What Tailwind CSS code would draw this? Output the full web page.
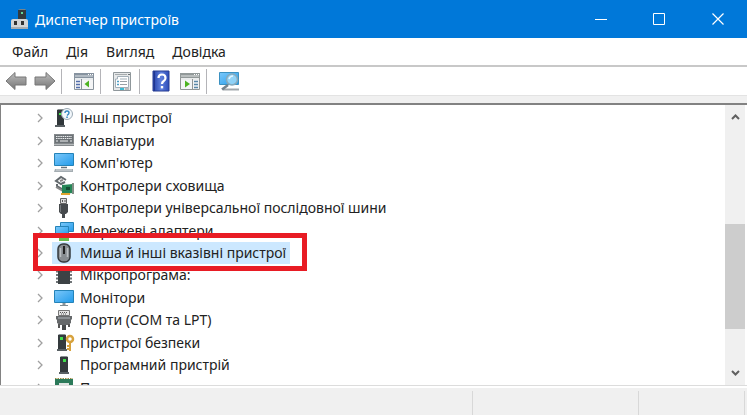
<!DOCTYPE html>
<html lang="uk">
<head>
  <meta charset="UTF-8" />
  <meta name="viewport" content="width=device-width, initial-scale=1" />
  <title>Диспетчер пристроїв</title>
  <script src="https://cdn.jsdelivr.net/npm/@tailwindcss/browser@4"></script>
</head>
<body class="flex h-screen flex-col overflow-hidden bg-[#f0f0f0] font-['Noto_Sans','Open_Sans',sans-serif] text-[14px] text-[#222]">
  <svg class="absolute size-0" aria-hidden="true">
    <defs>
      <linearGradient id="screen" x1="0" y1="0" x2="1" y2="1"><stop offset="0" stop-color="#7cc8fa" /><stop offset="1" stop-color="#229bea" /></linearGradient>
      <linearGradient id="steel" x1="0" y1="0" x2="0" y2="1"><stop offset="0" stop-color="#bdbdbd" /><stop offset="1" stop-color="#757575" /></linearGradient>
      <linearGradient id="blue" x1="0" y1="0" x2="1" y2="0"><stop offset="0" stop-color="#2440a8" /><stop offset=".5" stop-color="#5f80dd" /><stop offset="1" stop-color="#2c4cb8" /></linearGradient>
    </defs>
  </svg>

  <!-- title bar -->
  <header class="flex h-[38px] shrink-0 items-center bg-[#0078d9] text-white">
    <svg class="ml-[10px] h-[22px] w-[20px]" viewBox="0 0 20 22">
      <path d="M8 2h8v11H8z" fill="#333b40" /><path d="M8 2l2-1h5l1 1z" fill="#77848b" /><path d="M11 4h2v2h-2z" fill="#63d69a" />
      <path d="M1 13q0-2 2-2h13q2 0 2 2v8H1z" fill="#d3d5d7" /><path d="M1 19h17v2H1z" fill="#a9adb0" />
      <path d="M4 13h3v4H4zM11 13h3v4h-3z" fill="#333" />
    </svg>
    <h1 class="ml-[5px] grow">Диспетчер пристроїв</h1>
    <button class="flex h-full w-[58px] items-center justify-center" aria-label="Згорнути">
      <svg class="size-[14px]" viewBox="0 0 14 14" fill="none" stroke="#fff"><path d="M1 7.500h12" /></svg>
    </button>
    <button class="flex h-full w-[58px] items-center justify-center" aria-label="Розгорнути">
      <svg class="size-[14px]" viewBox="0 0 14 14" fill="none" stroke="#fff"><path d="M1.500 1.500h11v11h-11z" /></svg>
    </button>
    <button class="flex h-full w-[59px] items-center justify-center" aria-label="Закрити">
      <svg class="size-[14px]" viewBox="0 0 14 14" fill="none" stroke="#fff" stroke-width="1.200"><path d="M1.500 1.500l11 11M12.500 1.500l-11 11" /></svg>
    </button>
  </header>

  <!-- menu -->
  <nav class="flex h-[29px] shrink-0 items-center gap-[18px] border-b-2 border-[#c8c8c8] bg-white pl-[12px]">
    <button>Файл</button>
    <button>Дія</button>
    <button>Вигляд</button>
    <button>Довідка</button>
  </nav>

  <!-- toolbar -->
  <div class="flex h-[29px] shrink-0 items-center border-b border-[#e3e3e3] bg-white pl-[5px]" role="toolbar">
    <button aria-label="Назад">
      <svg class="h-[20px] w-[22px]" viewBox="0 0 22 20"><path d="M1 10l9-8.500v4.500h11v8H10v4.500z" fill="url(#steel)" stroke="#777" /></svg>
    </button>
    <button class="ml-[7px]" aria-label="Вперед">
      <svg class="h-[20px] w-[22px]" viewBox="0 0 22 20"><path d="M21 10l-9-8.500v4.500H1v8h11v4.500z" fill="url(#steel)" stroke="#777" /></svg>
    </button>
    <span class="ml-[5px] h-[25px] w-px bg-[#b4b4b8]"></span>
    <button class="ml-[11px]" aria-label="Дерево консолі">
      <svg class="h-[20px] w-[22px]" viewBox="0 0 22 20">
        <path d="M1.500 2.500h19v16h-19z" fill="#f4f5f6" stroke="#8a949d" /><path d="M1 2h20v5H1z" fill="#8793a0" />
        <path d="M2 5h18M2 8h18" stroke="#dce2e6" /><path d="M15 3.500h1M17 3.500h1M19 3.500h1" stroke="#fff" />
        <path d="M8.500 8v10" stroke="#8a949d" /><path d="M3 10.500h4M3 13.500h4M3 16.500h4" stroke="#536fac" stroke-width="1.500" />
        <path d="M16 9.500v7l-4.500-3.500z" fill="#4db321" />
      </svg>
    </button>
    <span class="ml-[5px] h-[25px] w-px bg-[#b4b4b8]"></span>
    <button class="ml-[11px]" aria-label="Властивості">
      <svg class="h-[22px] w-[20px]" viewBox="0 0 20 22">
        <path d="M1.500 2.500h17v18h-17z" fill="#e6e8e9" stroke="#8f979b" /><path d="M3 4.500h12" stroke="#a6abad" /><path d="M16 4.500h2" stroke="#6c7275" />
        <path d="M3.500 9h2V6.500h11v11h-13z" fill="#fff" stroke="#a2afb8" /><path d="M8 9h7" stroke="#a2afb8" />
        <path d="M5 11.500h2M5 14.500h2" stroke="#4c9fc7" stroke-width="1.500" /><path d="M8 11.500h7M8 14.500h7" stroke="#99a0a5" />
        <path d="M8 18h4v2H8z" fill="#3bbad2" /><path d="M13 18h4v2h-4z" fill="#bbb" />
      </svg>
    </button>
    <span class="ml-[7px] h-[25px] w-px bg-[#b4b4b8]"></span>
    <button class="ml-[11px]" aria-label="Довідка">
      <svg class="h-[22px] w-[20px]" viewBox="0 0 20 22">
        <path d="M2 1h16v20H2z" fill="url(#blue)" stroke="#263c92" /><path d="M3.500 1v20" stroke="#20368f" />
        <path d="M7.500 8q0-3.500 3.500-3.500T14.500 8q0 1.800-1.800 3T11 14" fill="none" stroke="#fff" stroke-width="2.200" /><path d="M9.800 16h2.400v2.400H9.800z" fill="#fff" />
      </svg>
    </button>
    <button class="ml-[8px]" aria-label="Панель дій">
      <svg class="h-[20px] w-[22px]" viewBox="0 0 22 20">
        <path d="M1.500 2.500h19v16h-19z" fill="#f4f5f6" stroke="#929696" /><path d="M1 2h20v5H1z" fill="#929999" />
        <path d="M2 5h18M2 8h18" stroke="#e0e3e3" /><path d="M15 3.500h1M17 3.500h1M19 3.500h1" stroke="#fff" />
        <path d="M13.500 8v10" stroke="#929696" /><path d="M15 10.500h4M15 13.500h4M15 16.500h4" stroke="#5987a8" stroke-width="1.500" />
        <path d="M6 9.500v7l5-3.500z" fill="#4db321" />
      </svg>
    </button>
    <span class="ml-[5px] h-[25px] w-px bg-[#b4b4b8]"></span>
    <button class="ml-[11px]" aria-label="Оновити конфігурацію обладнання">
      <svg class="h-[22px] w-[23px]" viewBox="0 0 23 22">
        <path d="M1.500 2.500h19v12h-19z" fill="url(#screen)" stroke="#3b91c1" /><path d="M5 19.500h16" stroke="#a2a8ac" stroke-width="2" />
        <path d="M10 15l-6 4.500" stroke="#75838d" stroke-width="2.500" />
        <circle cx="14" cy="9.500" r="5.500" fill="#a5dcf7" fill-opacity=".8" stroke="#87a9bb" stroke-width="1.500" /><path d="M11 9q1-3 4-3" fill="none" stroke="#e4f6ff" stroke-width="1.500" />
      </svg>
    </button>
  </div>

  <!-- device tree -->
  <main class="mt-[7px] flex min-h-0 grow border-t-2 border-l border-[#828282] bg-white">
    <ul class="mt-[2px] grid h-[292px] grow grid-rows-[repeat(13,1fr)] overflow-visible pl-[36px] leading-[22px]">
      <li class="flex items-center">
        <svg class="h-[10px] w-[6px]" viewBox="0 0 6 10" fill="none" stroke="#a0a0a0" stroke-width="1.300"><path d="M1 1l4 4-4 4" /></svg>
        <svg class="ml-[9px] h-[22px] w-[24px]" viewBox="0 0 24 22">
          <path d="M5 3h7v15H5z" fill="#30373a" /><path d="M5 3l1-1h6v1z" fill="#858c8e" /><path d="M3 18h10v2H3z" fill="#596064" /><path d="M7 6h2v2H7z" fill="#44e64b" />
          <circle cx="15" cy="7" r="5.500" fill="#f2f7fb" stroke="#9caab5" /><path d="M13 6q0-2 2-2t2 2q0 1-2 2.500" fill="none" stroke="#3587c1" stroke-width="1.400" /><path d="M14.300 9.500h1.500V11h-1.500z" fill="#3587c1" />
        </svg>
        <span class="pl-[4px]">Інші пристрої</span>
      </li>
      <li class="flex items-center">
        <svg class="h-[10px] w-[6px]" viewBox="0 0 6 10" fill="none" stroke="#a0a0a0" stroke-width="1.300"><path d="M1 1l4 4-4 4" /></svg>
        <svg class="ml-[9px] h-[22px] w-[24px]" viewBox="0 0 24 22">
          <path d="M2 4h20v12H2z" fill="#858a8d" /><path d="M3 5h18v8H3z" fill="#6c7276" />
          <path d="M4 6.500h16M4 8.500h16" stroke="#eceeef" stroke-dasharray="1.500 .7" /><path d="M4 11h2M8 11h8M18 11h2" stroke="#eceeef" /><path d="M2 14.500h20" stroke="#b5b9bb" />
        </svg>
        <span class="pl-[4px]">Клавіатури</span>
      </li>
      <li class="flex items-center">
        <svg class="h-[10px] w-[6px]" viewBox="0 0 6 10" fill="none" stroke="#a0a0a0" stroke-width="1.300"><path d="M1 1l4 4-4 4" /></svg>
        <svg class="ml-[9px] h-[22px] w-[24px]" viewBox="0 0 24 22">
          <path d="M2.500 1.500h19v12h-19z" fill="url(#screen)" stroke="#2483b8" /><path d="M9 15.500h6" stroke="#65737b" stroke-width="1.500" /><path d="M3 17h18v3H2z" fill="#a4adb2" /><path d="M4 18h16" stroke="#d5dadd" />
        </svg>
        <span class="pl-[4px]">Комп'ютер</span>
      </li>
      <li class="flex items-center">
        <svg class="h-[10px] w-[6px]" viewBox="0 0 6 10" fill="none" stroke="#a0a0a0" stroke-width="1.300"><path d="M1 1l4 4-4 4" /></svg>
        <svg class="ml-[9px] h-[22px] w-[24px]" viewBox="0 0 24 22">
          <path d="M14 5L9 2 4 6l5 3 4-2M5 9v2l5 3 3-2" fill="none" stroke="#646a6e" stroke-width="2" /><path d="M8 6l3-1" stroke="#888" stroke-width="2" /><path d="M4 12l7 4" stroke="#888" stroke-width="2" />
          <path d="M10 10l11-1v9l-11 1z" fill="#268657" /><path d="M14 12h4v3h-4z" fill="#164e35" /><path d="M21 8v11" stroke="#839088" stroke-width="2" /><path d="M9 18h9v2H9z" fill="#e0a52f" />
        </svg>
        <span class="pl-[4px]">Контролери сховища</span>
      </li>
      <li class="flex items-center">
        <svg class="h-[10px] w-[6px]" viewBox="0 0 6 10" fill="none" stroke="#a0a0a0" stroke-width="1.300"><path d="M1 1l4 4-4 4" /></svg>
        <svg class="ml-[9px] h-[22px] w-[24px]" viewBox="0 0 24 22">
          <path d="M8.500 1.500h6v5h-6z" fill="#ddd" stroke="#656565" /><path d="M10 3h1v2h-1zM12.500 3h1v2h-1z" fill="#555" />
          <path d="M7 7h9v8l-2 2h-1v4h-3v-4H9l-2-2z" fill="#464a4d" /><path d="M8.500 8v7" stroke="#73787b" />
        </svg>
        <span class="pl-[4px]">Контролери універсальної послідовної шини</span>
      </li>
      <li class="flex items-center">
        <svg class="h-[10px] w-[6px]" viewBox="0 0 6 10" fill="none" stroke="#a0a0a0" stroke-width="1.300"><path d="M1 1l4 4-4 4" /></svg>
        <svg class="ml-[9px] h-[22px] w-[24px]" viewBox="0 0 24 22">
          <path d="M8.500 2.500h13v9h-13z" fill="url(#screen)" stroke="#2483b8" /><path d="M3.500 6.500h13v9h-13z" fill="url(#screen)" stroke="#2483b8" /><path d="M7 18h10v3H7z" fill="#6dbb51" />
        </svg>
        <span class="pl-[4px]">Мережеві адаптери</span>
      </li>
      <li class="relative flex items-center" aria-selected="true">
        <svg class="h-[10px] w-[6px]" viewBox="0 0 6 10" fill="none" stroke="#a0a0a0" stroke-width="1.300"><path d="M1 1l4 4-4 4" /></svg>
        <span class="ml-[9px] flex items-center bg-[#cce8ff] pr-[4px]">
          <svg class="h-[22px] w-[24px]" viewBox="0 0 24 22">
            <rect x="6" y="2" width="12" height="18" rx="5" fill="#878c90" stroke="#353a3e" stroke-width="1.500" /><path d="M8.500 6v9M15.500 6v9" stroke="#bbc0c3" stroke-width="1.500" /><path d="M12 4v8" stroke="#222" stroke-width="2" />
          </svg>
          <span class="pl-[4px]">Миша й інші вказівні пристрої</span>
        </span>
        <span class="absolute -top-[9px] -left-[4px] z-10 h-[38px] w-[274px] border-5 border-[#e81c24]"></span>
      </li>
      <li class="flex items-center">
        <svg class="h-[10px] w-[6px]" viewBox="0 0 6 10" fill="none" stroke="#a0a0a0" stroke-width="1.300"><path d="M1 1l4 4-4 4" /></svg>
        <svg class="ml-[9px] h-[22px] w-[24px]" viewBox="0 0 24 22">
          <path d="M5 3v17M19 3v17" stroke="#6f7477" stroke-width="2" stroke-dasharray="2 1.500" /><path d="M6 2h12v18H6z" fill="#3d4245" /><path d="M7 3h10v2H7z" fill="#696f72" />
        </svg>
        <span class="pl-[4px]">Мікропрограма:</span>
      </li>
      <li class="flex items-center">
        <svg class="h-[10px] w-[6px]" viewBox="0 0 6 10" fill="none" stroke="#a0a0a0" stroke-width="1.300"><path d="M1 1l4 4-4 4" /></svg>
        <svg class="ml-[9px] h-[22px] w-[24px]" viewBox="0 0 24 22">
          <path d="M2.500 3.500h19v12h-19z" fill="url(#screen)" stroke="#2483b8" /><path d="M12 16v2" stroke="#8b969c" stroke-width="3" /><path d="M8 18.500h8" stroke="#7f8b91" />
        </svg>
        <span class="pl-[4px]">Монітори</span>
      </li>
      <li class="flex items-center">
        <svg class="h-[10px] w-[6px]" viewBox="0 0 6 10" fill="none" stroke="#a0a0a0" stroke-width="1.300"><path d="M1 1l4 4-4 4" /></svg>
        <svg class="ml-[9px] h-[22px] w-[24px]" viewBox="0 0 24 22">
          <path d="M6.500 1.500h11v5h-11z" fill="#e4e4e4" stroke="#777" /><path d="M8 3.500h8M9 5h6" stroke="#555" stroke-dasharray="1 1" />
          <path d="M4 7h16v3l-1 1v3l-3 2H8l-3-2v-3l-1-1z" fill="#66696b" /><path d="M6 9h12" stroke="#999da0" stroke-width="1.500" /><path d="M7 15v4M17 15v3" stroke="#555" stroke-width="2" /><path d="M10 16h4v5h-4z" fill="#484b4d" />
        </svg>
        <span class="pl-[4px]">Порти (COM та LPT)</span>
      </li>
      <li class="flex items-center">
        <svg class="h-[10px] w-[6px]" viewBox="0 0 6 10" fill="none" stroke="#a0a0a0" stroke-width="1.300"><path d="M1 1l4 4-4 4" /></svg>
        <svg class="ml-[9px] h-[22px] w-[24px]" viewBox="0 0 24 22">
          <path d="M6 3h8v14H6z" fill="#343a3d" /><path d="M6 3l1-1h6l1 1z" fill="#8a8f92" /><path d="M5 17h10v2H5z" fill="#596064" /><path d="M8 5h3v3H8z" fill="#40df4b" />
          <circle cx="18" cy="7" r="3" fill="#fff" stroke="#d7a23d" stroke-width="2.500" /><path d="M18 10v9M17 17h-2M17 14h-2" stroke="#d7a23d" stroke-width="2" />
        </svg>
        <span class="pl-[4px]">Пристрої безпеки</span>
      </li>
      <li class="flex items-center">
        <svg class="h-[10px] w-[6px]" viewBox="0 0 6 10" fill="none" stroke="#a0a0a0" stroke-width="1.300"><path d="M1 1l4 4-4 4" /></svg>
        <svg class="ml-[9px] h-[22px] w-[24px]" viewBox="0 0 24 22">
          <path d="M8 3h8v15H8z" fill="#343a3d" /><path d="M8 3l1-1h6l1 1z" fill="#8a8f92" /><path d="M7 18h10v2H7z" fill="#596064" /><path d="M11 5h3v3h-3z" fill="#40df4b" />
        </svg>
        <span class="pl-[4px]">Програмний пристрій</span>
      </li>
      <li class="flex items-center">
        <svg class="h-[10px] w-[6px]" viewBox="0 0 6 10" fill="none" stroke="#a0a0a0" stroke-width="1.300"><path d="M1 1l4 4-4 4" /></svg>
        <svg class="ml-[9px] h-[22px] w-[24px]" viewBox="0 0 24 22">
          <path d="M3 1.500h18" stroke="#9b8c45" stroke-dasharray="1.500 1" /><path d="M3 2h18v18H3z" fill="#2c7a5a" /><path d="M7 6h10v10H7z" fill="#dfe5e2" />
        </svg>
        <span class="pl-[4px]">Процесори</span>
      </li>
    </ul>

    <div class="mr-[2px] flex w-[20px] shrink-0 flex-col bg-[#f0f0f0]">
      <button class="flex h-[24px] items-center justify-center" aria-label="Прокрутити вгору">
        <svg class="h-[6px] w-[9px]" viewBox="0 0 9 6" fill="none" stroke="#606060" stroke-width="2"><path d="M1 5l3.500-3.500L8 5" /></svg>
      </button>
      <div class="flex grow flex-col">
        <div class="grow-95"></div>
        <div class="grow-105 bg-[#cdcdcd]"></div>
        <div class="grow-32"></div>
      </div>
      <button class="flex h-[24px] items-center justify-center" aria-label="Прокрутити вниз">
        <svg class="h-[6px] w-[9px]" viewBox="0 0 9 6" fill="none" stroke="#606060" stroke-width="2"><path d="M1 1l3.500 3.500L8 1" /></svg>
      </button>
    </div>
  </main>

  <!-- status bar -->
  <footer class="z-10 flex h-[30px] shrink-0 border-t border-[#dcdcdc] bg-[#f0f0f0]">
    <div class="flex grow border-t-2 border-white pt-[3px]">
      <div class="grow-474 border-r border-[#d8d8d8]"></div>
      <div class="grow-166 border-r border-[#d8d8d8]"></div>
      <div class="grow-105 border-r border-[#d8d8d8]"></div>
      <div class="w-[2px]"></div>
    </div>
  </footer>
</body>
</html>
